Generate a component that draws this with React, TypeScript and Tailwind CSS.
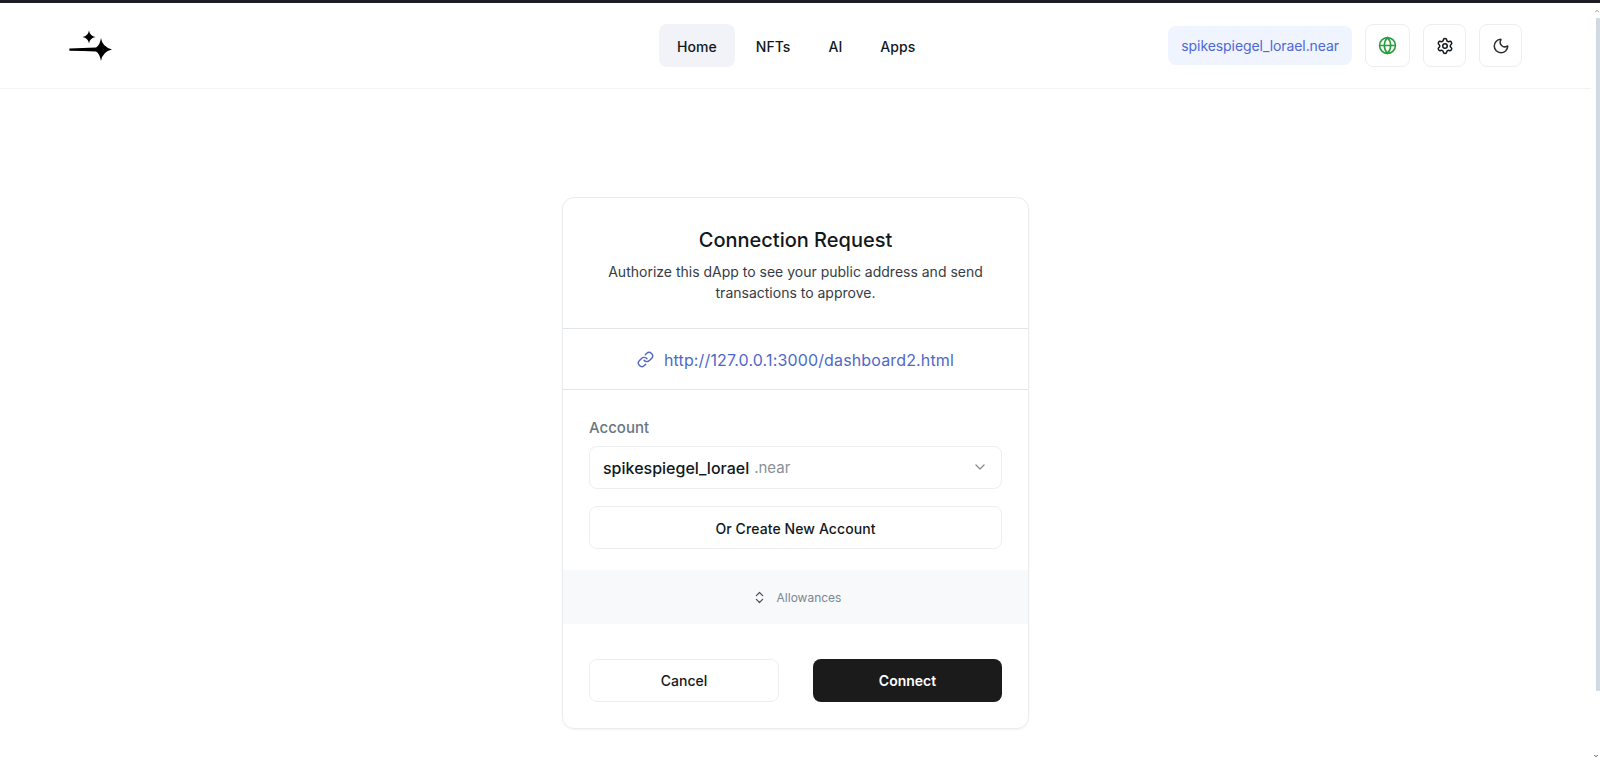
import { Globe, Settings, Moon, Link, ChevronDown, ChevronUp, ChevronsUpDown } from "lucide-react"

const navItems = ["Home", "NFTs", "AI", "Apps"]

const Logo = () => (
  <svg width="43" height="32" viewBox="0 0 43 32" fill="#000">
    <path d="M20 0.5 Q20.8 5.8 26.5 7 Q20.8 8.2 20 13.5 Q19.2 8.2 13.5 7 Q19.2 5.8 20 0.5 Z" />
    <path d="M32 8 Q33 16.6 43 19.5 Q33.5 21.6 32 31 Q30.6 23.4 27 21.4 Q14 21.2 0.5 20.8 Q0 19.5 0.5 18.4 Q14 18.3 27 17.6 Q30.8 15.6 32 8 Z" />
  </svg>
)

const App = () => {
  return (
    <div className="h-[761px] bg-white font-['Inter',sans-serif] text-[#11181c] overflow-hidden flex flex-col">
      <div className="h-[3px] shrink-0 bg-[#1c1c24]" />
      <div className="flex flex-1 min-h-0">
        <div className="w-[1591px] shrink-0">
          <header className="h-[86px] border-b border-[#f1f3f5] flex items-center pl-[69px] pr-[69px]">
            <div className="w-[590px] shrink-0">
              <Logo />
            </div>
            <nav className="flex items-center gap-[4px]">
              {navItems.map((item, i) => (
                <a
                  key={item}
                  className={`h-[43px] flex items-center pt-[2px] rounded-lg text-[14px] tracking-[0.05px] font-medium ${i === 0 ? "px-[18px] bg-[#f1f3f9]" : "px-[17px]"}`}
                >
                  {item}
                </a>
              ))}
            </nav>
            <div className="ml-auto flex items-center gap-[13px]">
              <div className="h-[39px] px-[13px] flex items-center rounded-lg bg-[#f0f4fe] text-[#4f68d8] text-[14px] tracking-[-0.08px]">
                spikespiegel_lorael.near
              </div>
              <button className="w-[45px] h-[43px] flex items-center justify-center rounded-lg border border-[#eceef0]">
                <Globe size={19} color="#2a9d3e" />
              </button>
              <button className="w-[43px] h-[43px] flex items-center justify-center rounded-lg border border-[#eceef0]">
                <Settings size={18} color="#11181c" />
              </button>
              <button className="w-[43px] h-[43px] flex items-center justify-center rounded-lg border border-[#eceef0]">
                <Moon size={18} color="#2b2f33" />
              </button>
            </div>
          </header>

          <main className="flex justify-center pt-[108px]">
            <div className="w-[467px] rounded-xl border border-[#e9ecef] shadow-[0_1px_2px_rgba(0,0,0,0.05)] overflow-hidden">
              <div className="h-[131px] border-b border-[#e2e5e9] px-[24px] pt-[28px] text-center">
                <h1 className="text-[20px] leading-[28px] font-medium">Connection Request</h1>
                <p className="mt-[7px] text-[14px] leading-[21px] text-[#363c44]">
                  Authorize this dApp to see your public address and send
                  <br />
                  transactions to approve.
                </p>
              </div>
              <div className="h-[61px] pt-[1px] border-b border-[#e2e5e9] flex items-center justify-center gap-[10px] text-[16px] tracking-[0.15px] text-[#4f68c8]">
                <Link size={17} />
                <span>http://127.0.0.1:3000/dashboard2.html</span>
              </div>
              <div className="px-[26px] pt-[28px]">
                <label className="block text-[15px] leading-[20px] font-medium text-[#687684]">Account</label>
                <div className="mt-[8px] h-[43px] rounded-lg border border-[#eceef0] flex items-center px-[13px]">
                  <span className="pt-[1px] text-[16px] font-medium">spikespiegel_lorael</span>
                  <span className="pt-[2px] ml-[5px] text-[15px] text-[#889096]">.near</span>
                  <ChevronDown size={16} color="#889096" className="ml-auto -mt-[2px]" />
                </div>
                <button className="mt-[17px] pt-[1px] w-full h-[43px] rounded-lg border border-[#eceef0] text-[14px] tracking-[0.1px] font-medium">
                  Or Create New Account
                </button>
              </div>
              <div className="mt-[21px] h-[54px] pt-[1px] bg-[#f8f9fa] flex items-center justify-center gap-[10px] pl-[2px] text-[12px] text-[#7a8794]">
                <ChevronsUpDown size={15} color="#4c5660" />
                <span>Allowances</span>
              </div>
              <div className="px-[26px] pt-[35px] pb-[26px] flex gap-[34px]">
                <button className="w-[190px] h-[43px] rounded-lg border border-[#eceef0] text-[14px] font-medium">Cancel</button>
                <button className="flex-1 h-[43px] rounded-lg bg-[#1b1b1b] text-white text-[14px] font-semibold">Connect</button>
              </div>
            </div>
          </main>
        </div>

        {/* the window's slim scrollbar */}
        <div className="flex-1 flex flex-col items-end">
          <ChevronUp size={6} color="#9aa0a6" strokeWidth={4} className="mt-[5px]" />
          <div className="mt-[4px] w-[4px] h-[673px] bg-[#d1dae3] rounded-[1px]" />
          <ChevronDown size={6} color="#555" strokeWidth={4} className="mt-auto mb-[2px] mr-[1px]" />
        </div>
      </div>
    </div>
  )
}

export default App
